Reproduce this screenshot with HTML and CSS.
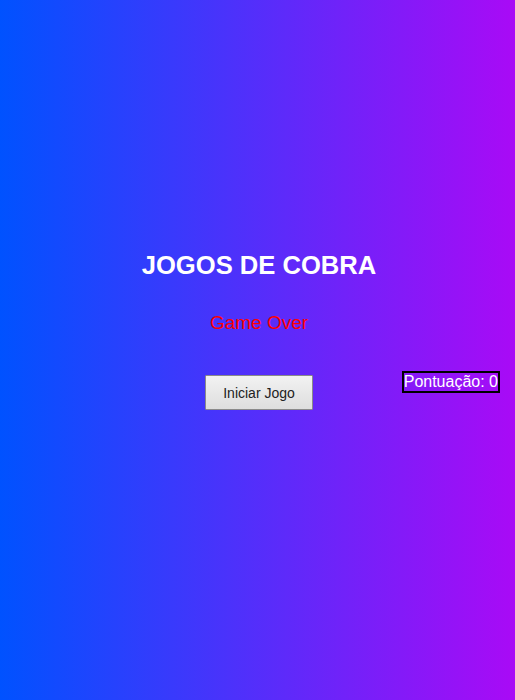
FILE: index.html
```html
<!DOCTYPE html>
<html lang="pt">
<head>
<meta charset="utf-8">
<title>Jogos de Cobra</title>
<link rel="stylesheet" href="styles.css">
</head>
<body>
  <main class="game">
    <h1 class="title">JOGOS DE COBRA</h1>
    <p class="status">Game Over</p>
    <button class="start-btn" type="button">Iniciar Jogo</button>
    <div class="score">Pontuação: 0</div>
  </main>
</body>
</html>
```

FILE: styles.css
```css
html, body {
  margin: 0;
  padding: 0;
}

body {
  min-height: 700px;
  background: linear-gradient(to right, #0052ff, #a90af6);
  font-family: "Liberation Sans", Arial, sans-serif;
}

.game {
  position: relative;
  display: flex;
  flex-direction: column;
  align-items: center;
  padding-top: 250px;
  padding-left: 3px;
}

.title {
  margin: 0;
  font-size: 25.6px;
  font-weight: bold;
  line-height: 30px;
  color: #ffffff;
}

.status {
  margin: 32px 0 0;
  font-size: 19px;
  line-height: 22px;
  color: #ff0000;
}

.start-btn {
  margin-top: 41px;
  height: 35px;
  padding: 0 17.5px;
  font-family: "Liberation Sans", Arial, sans-serif;
  font-size: 14px;
  color: #222222;
  background: linear-gradient(to bottom, #f2f2f2, #dedede);
  border: 1px solid #8a8a8a;
  border-radius: 1px;
}

.score {
  position: absolute;
  top: 371px;
  right: 15px;
  padding: 0;
  font-size: 16px;
  line-height: 18px;
  color: #ffffff;
  border: 2px solid #000000;
}
```
